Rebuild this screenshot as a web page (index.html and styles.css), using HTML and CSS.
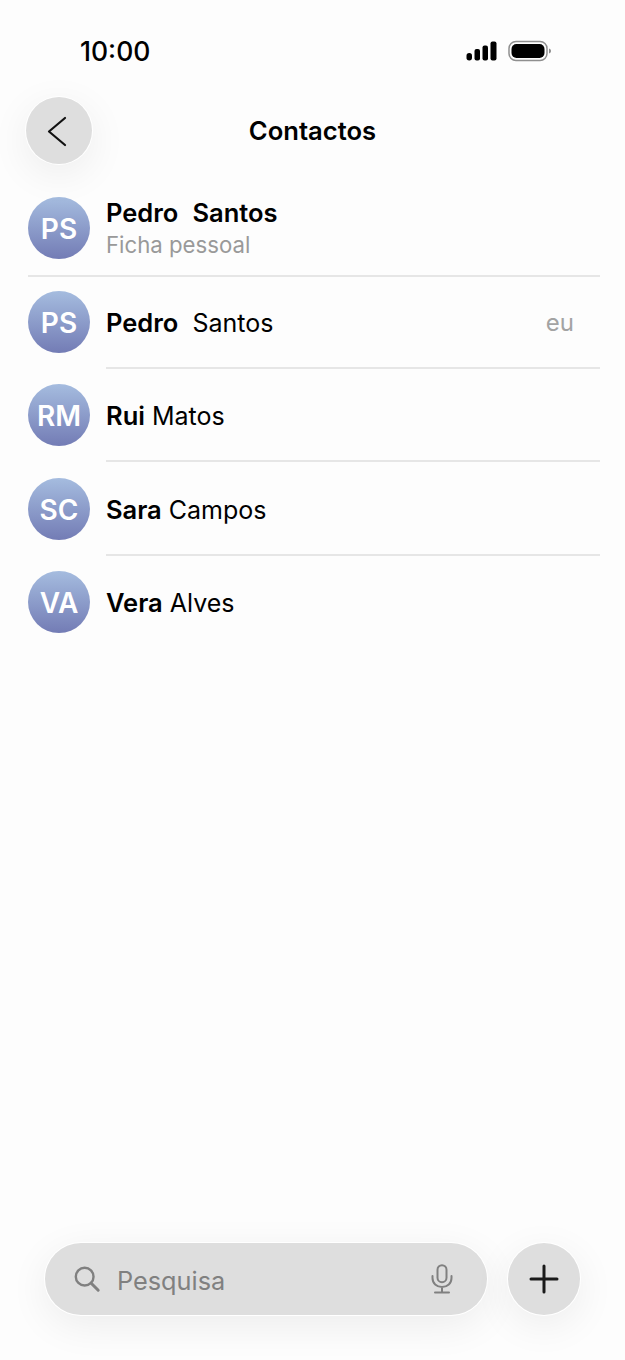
FILE: index.html
```html
<!DOCTYPE html>
<html lang="pt">
<head>
    <meta charset="UTF-8">
    <meta name="viewport" content="width=device-width, initial-scale=1.0">
    <title>Contactos</title>
    <link rel="stylesheet" href="styles.css">
</head>
<body>
    <div class="status-bar">
        <span class="clock">10:00</span>
        <div class="status-icons">
            <svg width="31" height="20" viewBox="0 0 31 20">
                <rect x="0.5" y="12" width="5.500" height="7.500" rx="2.700" fill="#000"/>
                <rect x="8.500" y="8" width="5.500" height="11.500" rx="2" fill="#000"/>
                <rect x="16.500" y="4.500" width="5.500" height="15" rx="2" fill="#000"/>
                <rect x="24.500" y="0.500" width="6" height="19" rx="2" fill="#000"/>
            </svg>
            <svg width="44" height="22" viewBox="0 0 44 22">
                <rect x="1" y="1.500" width="38" height="19" rx="7" fill="none" stroke="#8f8f8f" stroke-width="1.500"/>
                <rect x="3.500" y="4" width="33" height="14" rx="5" fill="#000"/>
                <path d="M41 8.500 C42.500 9 43 10 43 11 C43 12 42.500 13 41 13.500 Z" fill="#8f8f8f"/>
            </svg>
        </div>
    </div>

    <header class="top-bar">
        <button class="round-btn back-btn">
            <svg width="24" height="32" viewBox="0 0 24 32">
                <path d="M18 3 L2 16.500 L18 30" fill="none" stroke="#111" stroke-width="2.200" stroke-linecap="round" stroke-linejoin="round"/>
            </svg>
        </button>
        <h1>Contactos</h1>
    </header>

    <ul class="contacts">
        <li class="contact own-card">
            <div class="avatar">PS</div>
            <div class="contact-text">
                <div class="name"><b>Pedro</b>&nbsp; <b>Santos</b></div>
                <div class="subtitle">Ficha pessoal</div>
            </div>
        </li>
        <li class="contact">
            <div class="avatar">PS</div>
            <div class="contact-text">
                <div class="name"><b>Pedro</b>&nbsp; Santos</div>
                <span class="me">eu</span>
            </div>
        </li>
        <li class="contact">
            <div class="avatar">RM</div>
            <div class="contact-text">
                <div class="name"><b>Rui</b> Matos</div>
            </div>
        </li>
        <li class="contact">
            <div class="avatar">SC</div>
            <div class="contact-text">
                <div class="name"><b>Sara</b> Campos</div>
            </div>
        </li>
        <li class="contact">
            <div class="avatar">VA</div>
            <div class="contact-text">
                <div class="name"><b>Vera</b> Alves</div>
            </div>
        </li>
    </ul>

    <div class="bottom-bar">
        <div class="search">
            <svg width="28" height="28" viewBox="0 0 30 30">
                <circle cx="12.500" cy="12.500" r="9.500" fill="none" stroke="#808080" stroke-width="2.600"/>
                <path d="M19.500 19.500 L27 27" stroke="#808080" stroke-width="3.200" stroke-linecap="round"/>
            </svg>
            <span class="search-label">Pesquisa</span>
            <svg class="mic" width="22" height="30" viewBox="0 0 22 30">
                <rect x="6.500" y="1.200" width="9" height="17" rx="4.500" fill="none" stroke="#808080" stroke-width="2"/>
                <path d="M1.500 12 V14 C1.500 19.500 5.500 23 11 23 C16.500 23 20.500 19.500 20.500 14 V12 M11 23 V28 M4 28.500 H18" fill="none" stroke="#808080" stroke-width="2" stroke-linecap="round"/>
            </svg>
        </div>
        <button class="round-btn add-btn">
            <svg width="30" height="30" viewBox="0 0 30 30">
                <path d="M15 2 V28 M2 15 H28" stroke="#1a1a1a" stroke-width="3" stroke-linecap="round"/>
            </svg>
        </button>
    </div>
</body>
</html>
```

FILE: styles.css
```css
* {
    box-sizing: border-box;
}
body {
    font-family: Inter, "Liberation Sans", sans-serif;
    background-color: #fdfdfd;
    color: #000;
    display: flex;
    flex-direction: column;
    height: 100vh;
    margin: 0;
    overflow: hidden;
}
.status-bar {
    display: flex;
    justify-content: space-between;
    align-items: center;
    height: 36px;
    margin-top: 33px;
    padding: 0 73px 0 80px;
}
.clock {
    font-size: 26.500px;
    font-weight: 500;
}
.status-icons {
    display: flex;
    align-items: center;
    gap: 11px;
}
.round-btn {
    display: flex;
    align-items: center;
    justify-content: center;
    padding: 0;
    border: none;
    border-radius: 50%;
    background-color: #dedede;
    box-shadow: 0 0 0 1px #fff, 0 10px 40px rgba(0, 0, 0, 0.07);
}
.top-bar {
    position: relative;
    display: flex;
    align-items: center;
    justify-content: center;
    height: 68px;
    margin-top: 28px;
}
.back-btn {
    position: absolute;
    left: 26px;
    top: 0;
    width: 66px;
    height: 67px;
}
.top-bar h1 {
    margin: 0 0 2px;
    font-size: 25.600px;
    font-weight: 600;
}
.contacts {
    list-style: none;
    margin: 32px 0 0;
    padding: 0 25px 0 28px;
}
.contact {
    display: flex;
    align-items: flex-start;
    gap: 16px;
    height: 93.400px;
}
.own-card {
    height: 80px;
    margin-bottom: 14px;
    border-bottom: 2px solid #e6e6e6;
}
.avatar {
    flex-shrink: 0;
    display: flex;
    align-items: center;
    justify-content: center;
    width: 62px;
    height: 62px;
    padding-top: 2px;
    border-radius: 50%;
    background: linear-gradient(#a5bcdf, #737cb5);
    color: #fff;
    font-size: 28px;
    font-weight: 600;
}
.contact-text {
    flex: 1;
    display: flex;
    align-items: flex-start;
    justify-content: space-between;
    height: 78px;
    padding: 17px 26px 0 0;
    border-bottom: 2px solid #e6e6e6;
}
.contact:last-child .contact-text,
.own-card .contact-text {
    border-bottom: none;
}
.own-card .contact-text {
    display: block;
    height: auto;
    padding-top: 1px;
}
.name {
    font-size: 25px;
    line-height: 30px;
    font-weight: 400;
}
.name b {
    font-size: 25.500px;
    font-weight: 600;
}
.subtitle {
    margin-top: 2px;
    font-size: 22.200px;
    line-height: 30px;
    color: #999;
}
.me {
    font-size: 24px;
    line-height: 30px;
    color: #a3a3a3;
}
.bottom-bar {
    display: flex;
    gap: 21px;
    margin-top: auto;
    margin-bottom: 45px;
    padding: 0 45px;
}
.search {
    flex: 1;
    display: flex;
    align-items: center;
    height: 72px;
    padding: 0 34px 0 28px;
    border-radius: 36px;
    background-color: #dedede;
    box-shadow: 0 0 0 1px #fff, 0 10px 40px rgba(0, 0, 0, 0.07);
}
.search-label {
    margin: 2px 0 0 16px;
    font-size: 25.300px;
    color: #808080;
}
.mic {
    margin-left: auto;
}
.add-btn {
    width: 72px;
    height: 72px;
    flex-shrink: 0;
}
```
